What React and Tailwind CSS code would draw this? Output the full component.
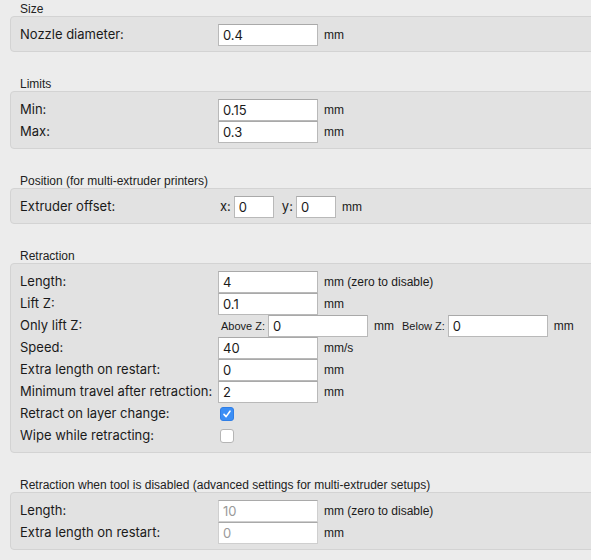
import React from "react";

const label = "text-[13px] text-[#1a1a1a] font-['Inter',sans-serif]";
const small = "text-[12px] text-[#1a1a1a] font-['Liberation_Sans',Arial,sans-serif]";

function Field({ value, width = "w-[100px]", disabled = false }) {
  return (
    <input
      readOnly
      value={value}
      className={`${width} h-[22px] bg-white border border-[#b9b9b9] border-t-[#a9a9a9] px-[4px] text-[13px] outline-none font-['Inter',sans-serif] ${
        disabled ? "text-[#9a9a9a] border-[#cfcfcf]" : "text-[#1a1a1a]"
      }`}
    />
  );
}

function Row({ name, children }) {
  return (
    <div className="flex items-center h-[22px]">
      <div className={`w-[198px] shrink-0 ${label}`}>{name}</div>
      {children}
    </div>
  );
}

function Unit({ children }) {
  return <span className={`ml-[6px] ${small}`}>{children}</span>;
}

function Check({ checked }) {
  return checked ? (
    <div className="ml-[2px] w-[14px] h-[14px] rounded-[3px] bg-[#3b8ef5] border border-[#2f7ee6] flex items-center justify-center">
      <svg width="10" height="10" viewBox="0 0 10 10">
        <path d="M2 5.4 L4.1 7.6 L8 2.2" fill="none" stroke="white" strokeWidth="1.6" strokeLinecap="round" strokeLinejoin="round" />
      </svg>
    </div>
  ) : (
    <div className="ml-[2px] w-[14px] h-[14px] rounded-[3px] bg-white border border-[#b5b5b5]" />
  );
}

function Section({ title, first = false, children }) {
  return (
    <section className={first ? "" : "mt-[23px]"}>
      <div className={`h-4 pl-[20px] pt-[2px] leading-[14px] ${small} text-[#222]`}>{title}</div>
      <div className="ml-[10px] -mr-[20px] bg-[#e2e2e2] border border-[#d3d3d3] rounded-[4px] pl-[9px] pt-[7px] pb-[5px]">
        {children}
      </div>
    </section>
  );
}

export default function App() {
  return (
    <div className="min-h-screen w-full overflow-hidden bg-[#ececec]">
      <Section title="Size" first>
        <Row name="Nozzle diameter:">
          <Field value="0.4" />
          <Unit>mm</Unit>
        </Row>
      </Section>

      <Section title="Limits">
        <Row name="Min:">
          <Field value="0.15" />
          <Unit>mm</Unit>
        </Row>
        <Row name="Max:">
          <Field value="0.3" />
          <Unit>mm</Unit>
        </Row>
      </Section>

      <Section title="Position (for multi-extruder printers)">
        <Row name="Extruder offset:">
          <span className={`ml-[2px] mr-[3px] ${label}`}>x:</span>
          <Field value="0" width="w-[40px]" />
          <span className={`ml-[8px] mr-[3px] ${label}`}>y:</span>
          <Field value="0" width="w-[40px]" />
          <Unit>mm</Unit>
        </Row>
      </Section>

      <Section title="Retraction">
        <Row name="Length:">
          <Field value="4" />
          <Unit>mm (zero to disable)</Unit>
        </Row>
        <Row name="Lift Z:">
          <Field value="0.1" />
          <Unit>mm</Unit>
        </Row>
        <Row name="Only lift Z:">
          <span className="ml-[3px] mr-[3px] text-[11px] text-[#1a1a1a] font-['Liberation_Sans',Arial,sans-serif]">Above Z:</span>
          <Field value="0" />
          <Unit>mm</Unit>
          <span className="ml-[8px] mr-[3px] text-[11px] text-[#1a1a1a] font-['Liberation_Sans',Arial,sans-serif]">Below Z:</span>
          <Field value="0" />
          <Unit>mm</Unit>
        </Row>
        <Row name="Speed:">
          <Field value="40" />
          <Unit>mm/s</Unit>
        </Row>
        <Row name="Extra length on restart:">
          <Field value="0" />
          <Unit>mm</Unit>
        </Row>
        <Row name="Minimum travel after retraction:">
          <Field value="2" />
          <Unit>mm</Unit>
        </Row>
        <Row name="Retract on layer change:">
          <Check checked />
        </Row>
        <Row name="Wipe while retracting:">
          <Check />
        </Row>
      </Section>

      <Section title="Retraction when tool is disabled (advanced settings for multi-extruder setups)">
        <Row name="Length:">
          <Field value="10" disabled />
          <Unit>mm (zero to disable)</Unit>
        </Row>
        <Row name="Extra length on restart:">
          <Field value="0" disabled />
          <Unit>mm</Unit>
        </Row>
      </Section>
    </div>
  );
}
